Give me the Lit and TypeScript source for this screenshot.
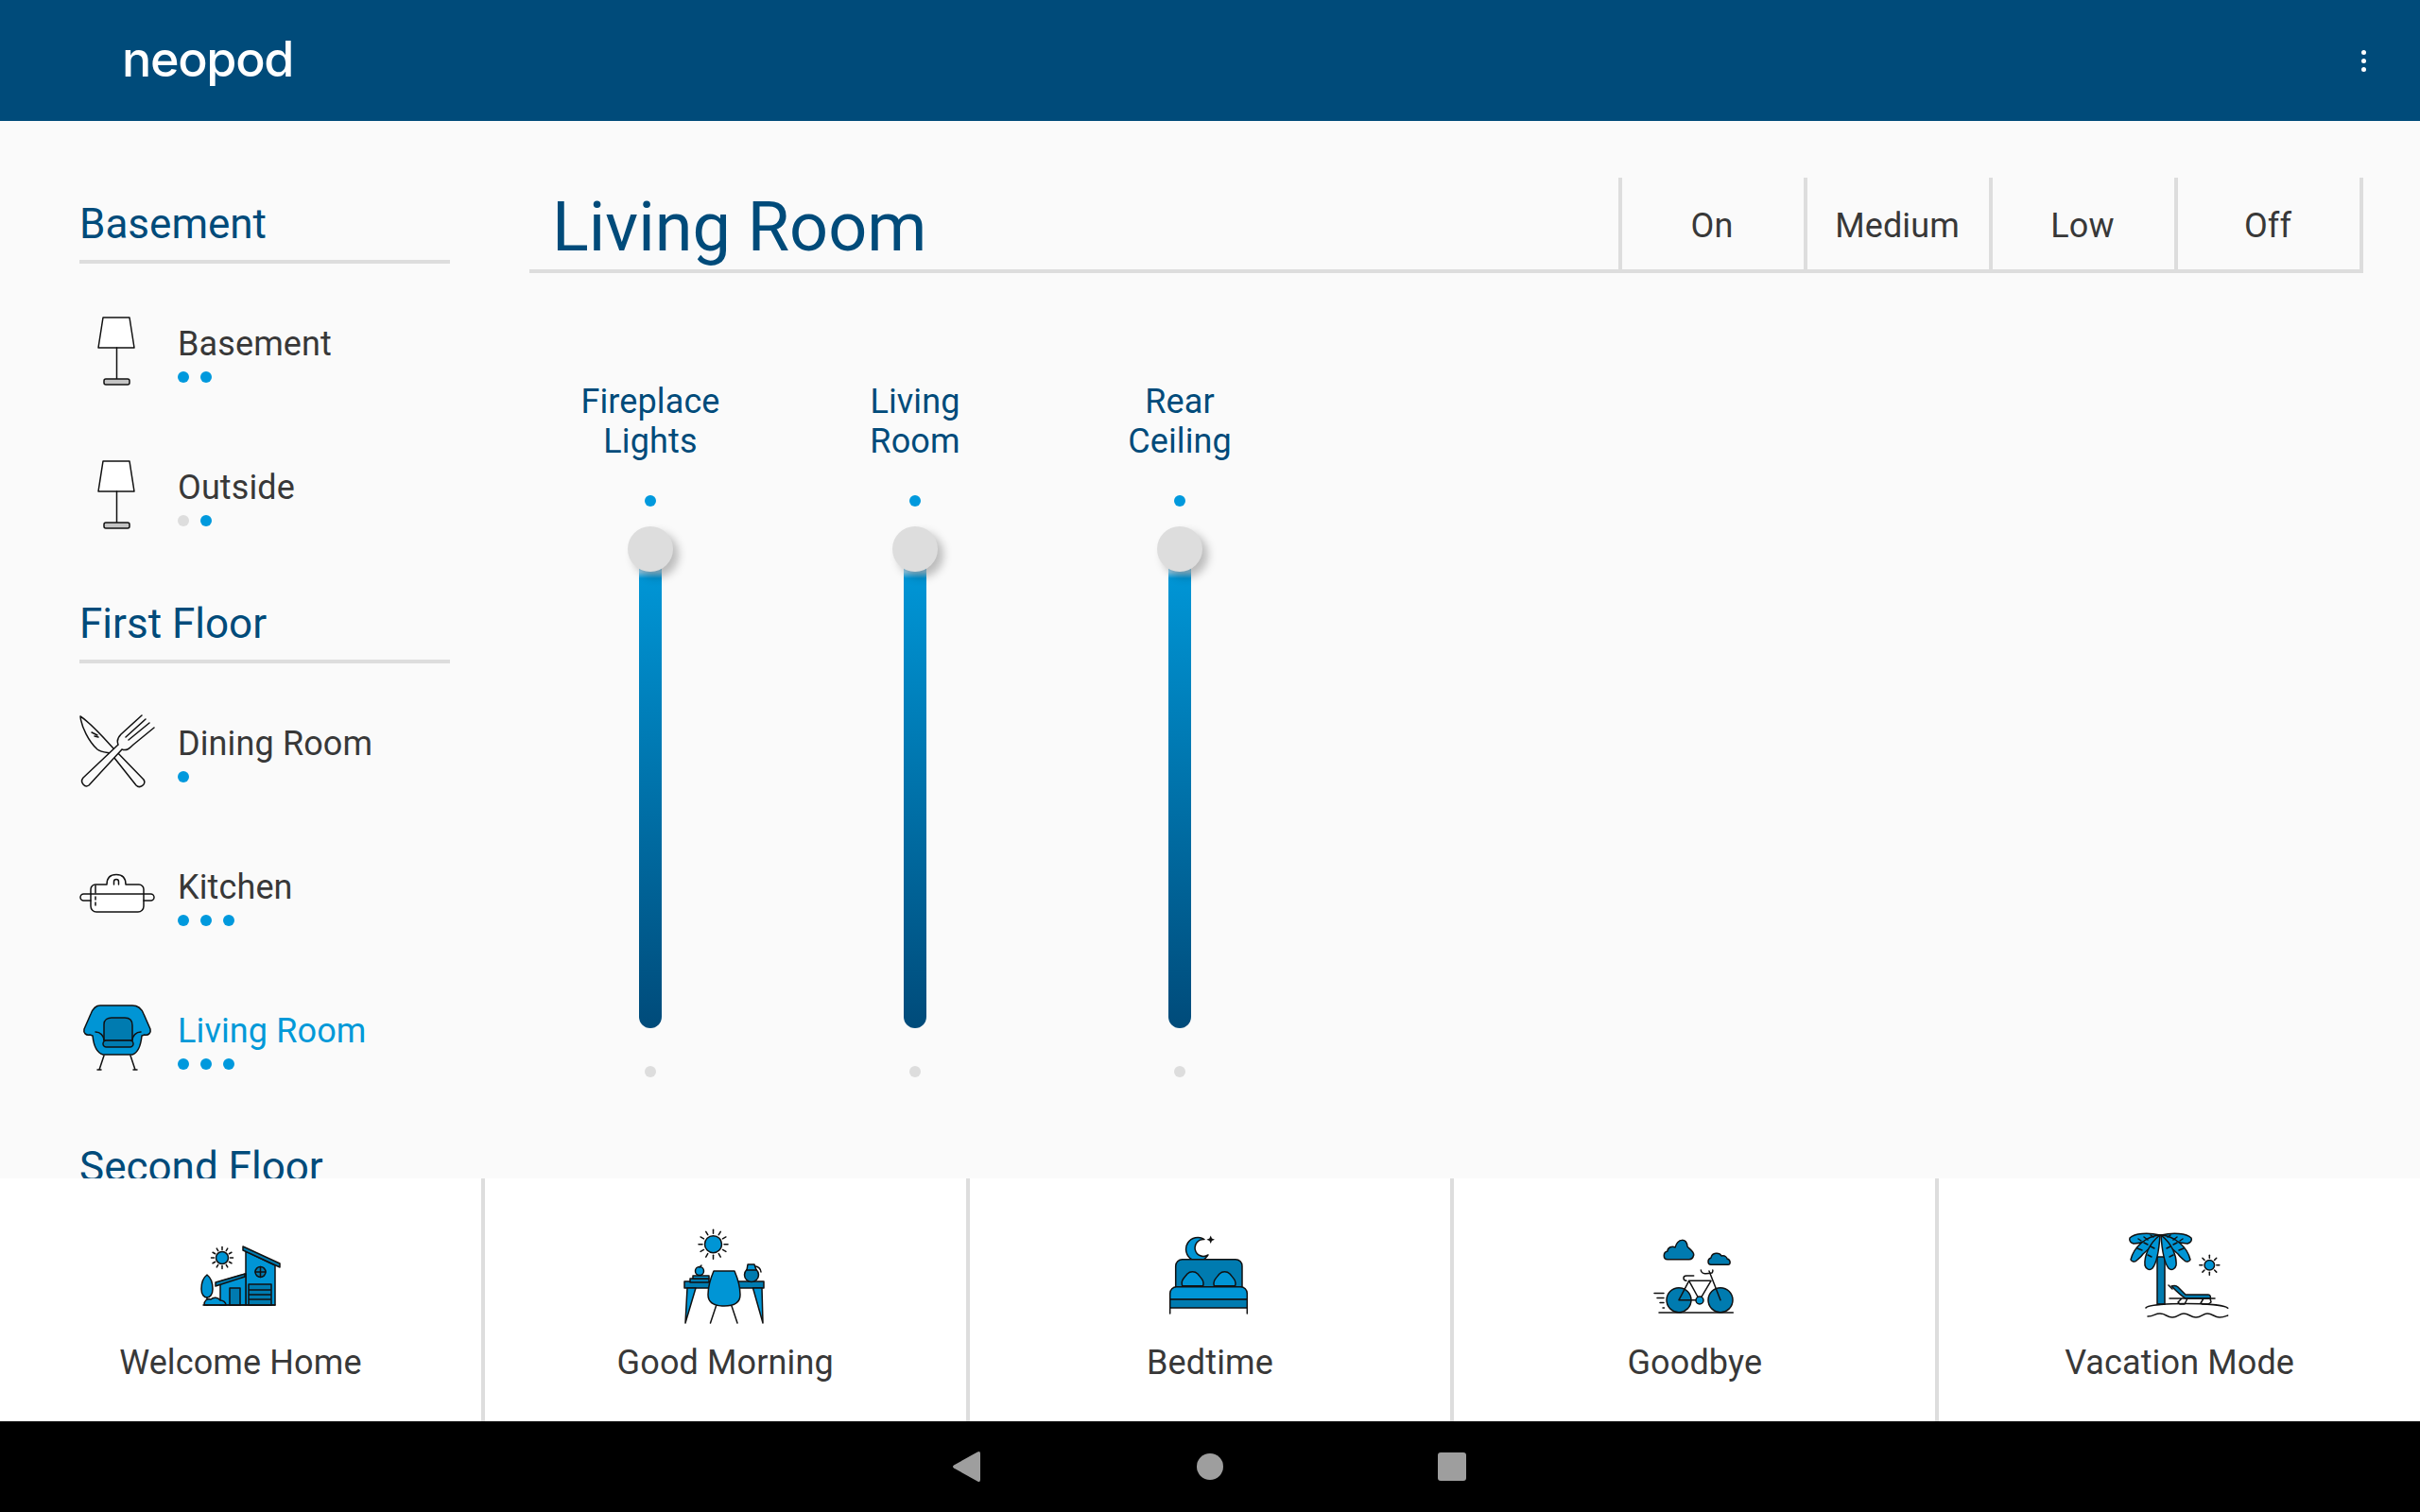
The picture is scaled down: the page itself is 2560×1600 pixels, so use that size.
import { LitElement, html, css, svg } from "lit";
import { customElement } from "lit/decorators.js";

const rays = (cx: number, cy: number, r1: number, r2: number, n: number) =>
  Array.from({ length: n }, (_, i) => {
    const a = (i * 2 * Math.PI) / n;
    return svg`<line class="n" x1=${cx + r1 * Math.cos(a)} y1=${cy + r1 * Math.sin(a)} x2=${cx + r2 * Math.cos(a)} y2=${cy + r2 * Math.sin(a)}></line>`;
  });

const lamp = svg`
  <path class="w" d="M25 4H53L58 36H20Z"/>
  <path class="n" d="M39.5 36V69"/>
  <rect class="g" x="26" y="69" width="27" height="6" rx="2"/>`;

const dining = svg`
  <path class="b" d="M1 3C12 10 26 26 37 38L33 42C27 41 23 41 19 38C10 30 2 14 1 3Z"/>
  <path class="n" d="M13 20L19 23M16 24L20 25"/>
  <path class="b" d="M37 38L68 70C71 75 64 80 60 76L33 42"/>
  <path class="b" d="M41 33L4 68C0 73 6 79 10 76L45 38"/>
  <path class="n" d="M41 33C39 28 41 25 44 22L66 2M45 38C50 40 53 37 57 33L79 15M49 25L70 6M52 28L74 10"/>`;

const kitchen = svg`
  <path class="w" d="M12 39V34A5 5 0 0 1 17 29H29C29 22 33 18.500 39 18.500C45 18.500 49 22 49 29H63A5 5 0 0 1 68 34V52A6 6 0 0 1 62 58H18A6 6 0 0 1 12 52Z"/>
  <path class="n" d="M36.500 29V26A2.500 2.500 0 0 1 41.500 26V29"/>
  <path class="n" d="M12 46H4.500A3.500 3.500 0 0 1 4.500 39H75.500A3.500 3.500 0 0 1 75.500 46H68"/>
  <path class="n" d="M17 30V38M17 42V45M17 48V51"/>`;

const chair = svg`
  <path class="n" d="M26 58L21 73M54 58L59 73M19 73H23M57 73H61"/>
  <path class="f" d="M22 5H56C62 5 66 9 68 14L75 30C76 34 73 37 69 36L66 37C65 47 62 55 56 57H25C18 55 15 47 14 37L11 36C7 37 4 34 5 30L12 14C14 9 17 5 22 5Z"/>
  <path class="d" d="M26 42V25C26 20 30 18 34 18H48C53 18 56 21 56 26V42Z"/>
  <path class="n" d="M17 33C22 33 26 37 26 42M65 33C60 33 56 37 56 42"/>
  <rect class="d" x="25" y="42" width="32" height="7" rx="3.500"/>`;

const house = svg`
  ${rays(37, 37, 8.5, 11.5, 12)}
  <circle class="f" cx="37" cy="37" r="6.5"/>
  <path class="f" d="M62 87V30L93 45V87Z"/>
  <path class="d" d="M59 25L98 43V47L59 29Z"/>
  <path class="f" d="M35 87V62L62 54V87Z"/>
  <path class="d" d="M30 63L61 54V57L30 67Z"/>
  <rect class="d" x="45" y="69" width="11" height="18"/>
  <path class="d" d="M65 65H89V87H65ZM65 71H89M65 76H89M65 81H89"/>
  <circle class="d" cx="77.5" cy="52" r="5.5"/>
  <path class="n" d="M77.5 46.500V57.500M72 52H83"/>
  <path class="f" d="M21 55C25 58 27 64 27 70C27 76 24 79 21 79C18 79 15 76 15 70C15 64 17 58 21 55Z"/>
  <path class="n" d="M21 79V87"/>
  <path class="f" d="M18 87C18 82 21 80 25 81C28 78 33 79 35 82C38 82 41 84 41 87Z"/>
  <path class="n" d="M17 87H93"/>`;

const morning = svg`<g transform="translate(-1 0)">
  ${rays(44.5, 22.7, 11.5, 15.5, 12)}
  <circle class="f" cx="44.5" cy="22.7" r="9"/>
  <path class="n" d="M47.500 88L41.500 106M64 88L70 106"/>
  <rect class="d" x="14" y="62" width="84" height="7"/>
  <path class="f" d="M17 69H26L15 106Z"/>
  <path class="f" d="M86.500 69H96L97 106Z"/>
  <rect class="d" x="20" y="59" width="20" height="4"/>
  <rect class="f" x="23" y="56" width="17" height="3"/>
  <circle class="f" cx="30" cy="51" r="4.500"/>
  <path class="n" d="M30 47L32 45"/>
  <path class="f" d="M45 51H67C70 58 73 68 73 76C73 84 67 88 56 88C45 88 39 84 39 76C39 68 42 58 45 51Z"/>
  <circle class="d" cx="85" cy="55" r="7.500"/>
  <path class="f" d="M81 44H88L90 50H80Z"/>
  <path class="n" d="M89 46C92 46 95 49 95 52"/>
</g>`;

const bed = svg`<g transform="translate(-2 0)">
  <path class="f" d="M52 17.500A12.500 12.500 0 1 0 56 34A9 9 0 1 1 52 17.500Z"/>
  <path class="s" d="M58.700 13.500L60 16.500L63 17.700L60 19L58.700 22L57.400 19L54.400 17.700L57.400 16.500Z"/>
  <path class="d" d="M21.700 67.700V46A7 7 0 0 1 29 38.700H85A7 7 0 0 1 92 46V67.700Z"/>
  <path class="f" d="M28.700 66.700C27 61 30 59 34 54C37 51 42 51 45 54C49 59 52 61 50.700 66.700Z"/>
  <path class="f" d="M62.300 66.700C61 61 64 59 68 54C71 51 76 51 79 54C83 59 86 61 84.700 66.700Z"/>
  <path class="f" d="M15.700 81V75A7 7 0 0 1 23 67.700H90A7 7 0 0 1 97.300 75V81Z"/>
  <rect class="d" x="15.700" y="81" width="81.600" height="9"/>
  <path class="n" d="M15.700 90V96M97.300 90V96"/>
</g>`;

const bike = svg`<g transform="translate(-3 0)">
  <path class="d" d="M30 38.700C25 38.700 25 31 30 30C30 26 35 24 38 26C41 16 50 16 51 25C52 27 58 30 57.700 34C57 37 55 38.700 53 38.700Z"/>
  <path class="d" d="M76 44.300C72 44.300 72 38 76 37C77 31 85 31 87 35C91 34 93 37 93 38C97 39 97 44.300 94 44.300Z"/>
  <circle class="d" cx="42" cy="81.700" r="13"/>
  <circle class="d" cx="86" cy="81.700" r="13"/>
  <path class="n" d="M42 81.700H64L76 61.300H52.700L64 82M42 81.700L52.700 61.300M74 51L86 81.700"/>
  <path class="n" d="M57.700 56H50C46 56 46 61 50 61.300"/>
  <path class="n" d="M65.300 50C66 55 72 54 77 53C78 52 78 50 77.700 50"/>
  <circle class="f" cx="64" cy="82" r="4"/>
  <path class="n" d="M21 95H99.300M16 74.500H26M19 79.500H26M22 84.500H26M25 90H26.500"/>
</g>`;

const leaves = svg`
  <path class="f" d="M37 13C24 10 10 11 5 16C4 19 6 21 9 22C18 22 28 18 37 13Z"/>
  <path class="f" d="M37 13C22 14 9 26 6 39C7 41 10 42 12 40C14 38 17 36 19 33C26 27 33 20 37 13Z"/>
  <path class="f" d="M37 13C25 22 20 36 21 45C22 49 26 51 29 48C33 43 36 28 37 13Z"/>
  <path class="n" d="M30 15L27 13M24 18L20 15M17 19L14 17M24 23L20 21M18 29L13 27M31 27L27 25M28 36L24 34"/>`;

const palm = svg`<g transform="translate(-2 0)">
  <rect class="d" x="34" y="36" width="8" height="50"/>
  ${leaves}
  <g transform="translate(75 0) scale(-1 1)">${leaves}</g>
  ${rays(89.3, 44.7, 7.5, 10.5, 8)}
  <circle class="f" cx="89.3" cy="44.7" r="5.3"/>
  <path class="d" d="M49 67C52 66 54 66 56 68L64 76H88C90 76 91 78 90 80H64C60 78 54 72 49 67Z"/>
  <path class="n" d="M46 66L50 70M56 84L60 80L66 80L63 86L58 86ZM80 85L83 80L90 80L91 84L88 86L82 86ZM47 80H95"/>
  <path class="n" d="M22 90C24 84 104 84 108.700 90.300"/>
  <path class="n" d="M24 99C31 99 31 96 37 96C43 96 44 100 50 100C56 100 57 96 62 96C68 96 69 100 75 100C81 100 82 96 87 96C93 96 94 100 100 100C104 100 106 99 108.700 98"/>
</g>`;

const sections = [
  { name: "Basement", rooms: [
    { name: "Basement", icon: lamp, dots: [1, 1] },
    { name: "Outside", icon: lamp, dots: [0, 1] },
  ] },
  { name: "First Floor", rooms: [
    { name: "Dining Room", icon: dining, dots: [1] },
    { name: "Kitchen", icon: kitchen, dots: [1, 1, 1] },
    { name: "Living Room", icon: chair, dots: [1, 1, 1], active: true },
  ] },
  { name: "Second Floor", rooms: [] as any[] },
];

const scenes = [
  { name: "Welcome Home", icon: house },
  { name: "Good Morning", icon: morning },
  { name: "Bedtime", icon: bed },
  { name: "Goodbye", icon: bike },
  { name: "Vacation Mode", icon: palm },
];

const sliders = [["Fireplace", "Lights"], ["Living", "Room"], ["Rear", "Ceiling"]];

@customElement("app-root")
export class AppRoot extends LitElement {
  static styles = css`
    :host {
      display: flex;
      flex-direction: column;
      width: 100%;
      height: 100vh;
      overflow: hidden;
      font-family: Roboto, "Liberation Sans", sans-serif;
      font-size: 36px;
      line-height: 44px;
      letter-spacing: 0.12px;
      color: #383838;
      background: #fafafa;
    }
    svg { display: block; flex: none; }
    svg .n { fill: none; stroke: #111; stroke-width: 1.5; stroke-linecap: round; stroke-linejoin: round; }
    svg .b { fill: #fafafa; stroke: #111; stroke-width: 1.5; stroke-linejoin: round; }
    svg .w { fill: #fff; stroke: #111; stroke-width: 1.5; stroke-linejoin: round; }
    svg .g { fill: #c4c4c4; stroke: #111; stroke-width: 1.5; }
    svg .f { fill: #0095d5; stroke: #111; stroke-width: 1.5; stroke-linejoin: round; }
    svg .d { fill: #007bb0; stroke: #111; stroke-width: 1.5; stroke-linejoin: round; }
    svg .s { fill: #111; }

    .top {
      flex: none;
      height: 128px;
      background: #004b7a;
      display: flex;
      align-items: center;
      justify-content: space-between;
      padding: 0 57px 0 129px;
      box-sizing: border-box;
    }
    .logo {
      font-family: Inter, sans-serif;
      font-weight: 500;
      font-size: 52px;
      line-height: 60px;
      letter-spacing: -1.3px;
      color: #fff;
      margin-top: -2px;
    }
    .kebab { display: flex; flex-direction: column; gap: 4px; }
    .kebab i { width: 5px; height: 5px; border-radius: 50%; background: #fff; display: block; }

    .main { flex: 1; min-height: 0; display: flex; overflow: hidden; }
    .side { flex: none; width: 560px; box-sizing: border-box; padding: 83px 84px 0; overflow: hidden; }
    .side h2 {
      margin: 0;
      width: 392px;
      font-size: 44px;
      line-height: 52px;
      font-weight: 400;
      letter-spacing: 0;
      color: #004b7a;
      padding-bottom: 12px;
      border-bottom: 4px solid #ddd;
    }
    .rooms { padding: 18px 0 33px; }
    .room { height: 152px; box-sizing: border-box; padding-top: 35px; display: flex; gap: 24px; }
    .room .txt { padding-top: 10px; }
    .room.on .name { color: #0099d8; }
    .dots { display: flex; gap: 12px; margin-top: 7px; }
    .dot { width: 12px; height: 12px; border-radius: 50%; background: #0099dd; }
    .dot.off { background: #ddd; }

    .panel { flex: 1; min-width: 0; padding: 60px 60px 0 0; }
    .head { display: flex; justify-content: space-between; height: 97px; border-bottom: 4px solid #ddd; }
    h1 { margin: 0; padding: 11px 0 0 24px; font-size: 72px; line-height: 84px; font-weight: 400; letter-spacing: 0; color: #004b7a; }
    .btns { display: flex; }
    .btn { width: 196px; box-sizing: border-box; border-left: 4px solid #ddd; padding: 29px 2px 0 0; text-align: center; }
    .btn:last-child { width: 200px; border-right: 4px solid #ddd; }

    .sliders { display: flex; gap: 80px; padding: 115px 0 0 28px; }
    .sl { width: 200px; display: flex; flex-direction: column; align-items: center; }
    .lbl { color: #004b7a; line-height: 42px; text-align: center; height: 84px; }
    .sl .dot { margin-top: 36px; }
    .sl .dot.off { margin-top: 40px; }
    .rail { position: relative; margin-top: 21px; width: 48px; height: 531px; display: flex; justify-content: center; }
    .track {
      width: 24px;
      height: 507px;
      margin-top: 24px;
      border-radius: 0 0 12px 12px;
      background: linear-gradient(#8fcbe8 24px, #0095d5 31px, #004b7a 100%);
    }
    .thumb {
      position: absolute;
      left: 0;
      top: 0;
      width: 48px;
      height: 48px;
      border-radius: 50%;
      background: #ddd;
      box-shadow: 6px 6px 10px rgba(0, 0, 0, 0.25);
    }

    .scenes { flex: none; height: 257px; background: #fff; display: flex; }
    .scene {
      flex: 1 1 0;
      min-width: 0;
      border-right: 4px solid #ddd;
      padding-top: 47px;
      display: flex;
      flex-direction: column;
      align-items: center;
      gap: 14px;
    }
    .scene:last-child { border-right: 0; }

    .nav { flex: none; height: 96px; background: #000; display: flex; justify-content: center; align-items: center; }
    .nav svg { fill: #9e9e9e; }
  `;

  render() {
    return html`
      <div class="top">
        <div class="logo">neopod</div>
        <div class="kebab"><i></i><i></i><i></i></div>
      </div>
      <div class="main">
        <div class="side">
          ${sections.map(
            (s) => html`
              <h2>${s.name}</h2>
              <div class="rooms">
                ${s.rooms.map(
                  (r) => html`
                    <div class="room ${r.active ? "on" : ""}">
                      <svg width="80" height="80" viewBox="0 0 80 80">${r.icon}</svg>
                      <div class="txt">
                        <div class="name">${r.name}</div>
                        <div class="dots">
                          ${r.dots.map((d: number) => html`<div class="dot ${d ? "" : "off"}"></div>`)}
                        </div>
                      </div>
                    </div>
                  `
                )}
              </div>
            `
          )}
        </div>
        <div class="panel">
          <div class="head">
            <h1>Living Room</h1>
            <div class="btns">
              ${["On", "Medium", "Low", "Off"].map((b) => html`<div class="btn">${b}</div>`)}
            </div>
          </div>
          <div class="sliders">
            ${sliders.map(
              (l) => html`
                <div class="sl">
                  <div class="lbl">${l[0]}<br />${l[1]}</div>
                  <div class="dot"></div>
                  <div class="rail"><div class="track"></div><div class="thumb"></div></div>
                  <div class="dot off"></div>
                </div>
              `
            )}
          </div>
        </div>
      </div>
      <div class="scenes">
        ${scenes.map(
          (s) => html`
            <div class="scene">
              <svg width="112" height="112" viewBox="0 0 112 112">${s.icon}</svg>
              <div>${s.name}</div>
            </div>
          `
        )}
      </div>
      <div class="nav">
        <svg width="544" height="32" viewBox="0 0 544 32">
          <path d="M1 14.500L26 0.500Q29 -1 29 2V30Q29 33 26 31.500L1 17.500Q-1 16 1 14.500Z"/>
          <circle cx="272" cy="16" r="14"/>
          <rect x="513" y="1" width="30" height="30" rx="3"/>
        </svg>
      </div>
    `;
  }
}
